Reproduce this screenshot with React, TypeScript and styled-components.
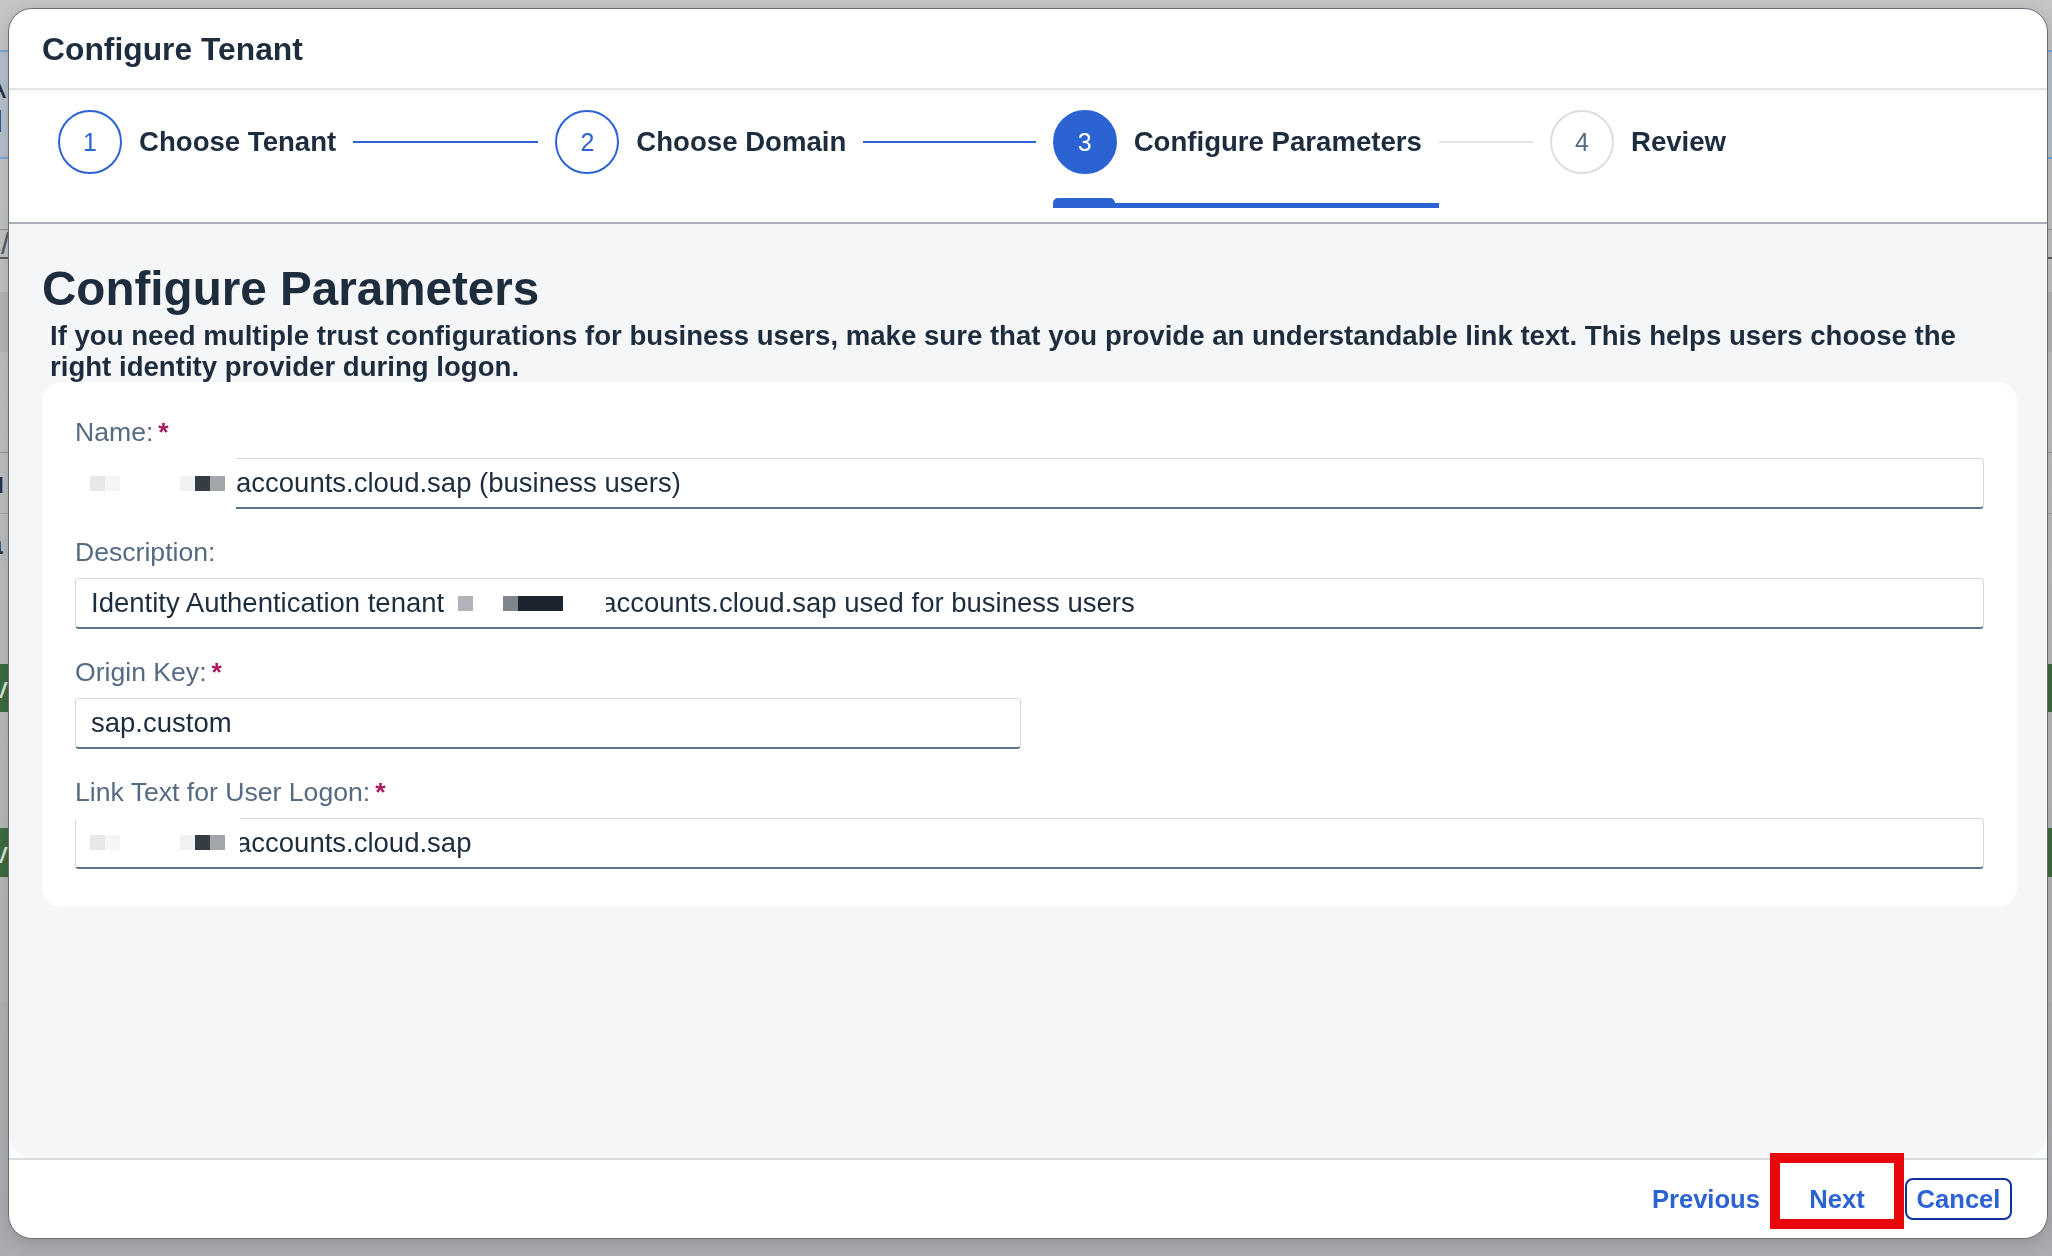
import React from "react";
import styled, { createGlobalStyle } from "styled-components";

const blue = "#2b63d2";
const ink = "#1d2d3e";
const muted = "#556b82";

const GlobalStyle = createGlobalStyle`
  html, body {
    margin: 0;
    padding: 0;
    height: 100%;
    overflow: hidden;
  }
  body {
    background: #b9babd;
    font-family: "Liberation Sans", Arial, sans-serif;
    color: ${ink};
  }
`;

/* the page behind the dialog, only a sliver of it shows at the left */
const Backdrop = styled.div`
  height: 100vh;
  display: flex;
  flex-direction: column;
  background: linear-gradient(180deg, #c4c5c7 0%, #b7b9bb 60%, #a9abae 100%);
`;

const BgRow = styled.div<{ $h?: number; $bg?: string; $line?: string; $top?: string }>`
  height: ${(p) => (p.$h ? `${p.$h}px` : "auto")};
  flex: ${(p) => (p.$h ? "none" : 1)};
  background: ${(p) => p.$bg || "transparent"};
  border-bottom: ${(p) => p.$line || "none"};
  border-top: ${(p) => p.$top || "none"};
  display: flex;
  flex-direction: column;
  justify-content: center;
  overflow: hidden;
  white-space: nowrap;
`;

const Frag = styled.span<{ $color?: string; $bold?: boolean }>`
  margin-left: -14px;
  font-size: 30px;
  line-height: 34px;
  font-weight: ${(p) => (p.$bold ? 700 : 400)};
  color: ${(p) => p.$color || "#2a3440"};
`;

const Dialog = styled.div`
  position: fixed;
  top: 8px;
  left: 8px;
  width: 2040px;
  height: 1231px;
  box-sizing: border-box;
  border: 1px solid #6b6f75;
  border-radius: 24px;
  background: #fff;
  overflow: hidden;
  display: flex;
  flex-direction: column;
  box-shadow: 0 4px 16px rgba(0, 0, 0, 0.15);
`;

const Header = styled.header`
  position: relative;
  z-index: 2;
  height: 81px;
  box-sizing: border-box;
  padding: 2px 0 0 33px;
  display: flex;
  align-items: center;
  border-bottom: 2px solid #e3e5e7;
  box-shadow: 0 2px 6px rgba(0, 0, 0, 0.04);
`;

const Title = styled.h1`
  margin: 0;
  font-size: 31.8px;
  font-weight: 700;
  color: ${ink};
`;

const Steps = styled.nav`
  height: 134px;
  box-sizing: border-box;
  padding: 20px 0 0 49px;
  display: flex;
  align-items: flex-start;
  border-bottom: 2px solid #a9b0b7;
`;

const StepItem = styled.div<{ $last?: boolean }>`
  flex: ${(p) => (p.$last ? "none" : 1)};
  width: ${(p) => (p.$last ? "497px" : "auto")};
  display: flex;
  align-items: flex-start;
`;

const StepHead = styled.div`
  display: flex;
  flex-direction: column;
`;

const HeadRow = styled.div`
  display: flex;
  align-items: center;
  gap: 17px;
  padding-right: 17px;
`;

const Circle = styled.span<{ $state: "done" | "active" | "todo" }>`
  width: 64px;
  height: 64px;
  box-sizing: border-box;
  border-radius: 50%;
  flex: none;
  display: flex;
  align-items: center;
  justify-content: center;
  font-size: 25px;
  border: 2px solid ${(p) => (p.$state === "todo" ? "#dcdddf" : blue)};
  background: ${(p) => (p.$state === "active" ? blue : "#fff")};
  color: ${(p) =>
    p.$state === "active" ? "#fff" : p.$state === "todo" ? muted : blue};
`;

const StepLabel = styled.span`
  font-size: 27.6px;
  font-weight: 700;
  color: ${ink};
  white-space: nowrap;
`;

const Underline = styled.div`
  margin-top: 24px;
  display: flex;
  align-items: flex-end;
`;

const UnderBump = styled.span`
  width: 62px;
  height: 10px;
  border-radius: 5px 5px 0 0;
  background: ${blue};
`;

const UnderRest = styled.span`
  flex: 1;
  height: 5px;
  background: ${blue};
`;

const Connector = styled.span<{ $done?: boolean }>`
  flex: 1;
  height: 2px;
  margin: 31px 17px 0 0;
  background: ${(p) => (p.$done ? blue : "#e2e3e4")};
`;

const Content = styled.main`
  flex: 1;
  background: #f5f6f7;
  padding: 37px 30px 0 33px;
  border-radius: 0 0 24px 24px;
`;

const Heading = styled.h2`
  margin: 0;
  font-size: 47.6px;
  line-height: 56px;
  font-weight: 700;
  color: ${ink};
`;

const Intro = styled.p`
  margin: 3px 0 0;
  padding: 0 24px 0 8px;
  font-size: 27.6px;
  line-height: 31px;
  font-weight: 700;
  color: ${ink};
`;

const Card = styled.section`
  background: #fff;
  border-radius: 20px;
  padding: 34px 33px 38px 33px;
  display: flex;
  flex-direction: column;
  gap: 27px;
`;

const Field = styled.div`
  display: flex;
  flex-direction: column;
  gap: 10px;
`;

const Label = styled.label`
  font-size: 26.6px;
  line-height: 32px;
  color: ${muted};
`;

const Required = styled.span`
  margin-left: 5px;
  font-weight: 700;
  color: #aa1a60;
`;

const InputBox = styled.div<{ $width?: number; $pad?: number }>`
  position: relative;
  width: ${(p) => (p.$width ? `${p.$width}px` : "100%")};
  height: 51px;
  box-sizing: border-box;
  padding-left: ${(p) => p.$pad ?? 15}px;
  border: 1px solid #d3d8dd;
  border-bottom: 2px solid #5b738b;
  border-radius: 4px;
  background: #fff;
  display: flex;
  align-items: center;
  font-size: 27.5px;
  color: ${ink};
  white-space: nowrap;
`;

/* white mask with pixel blocks over the left part of a value */
const Mask = styled.span<{ $w: number; $cover?: boolean }>`
  position: absolute;
  z-index: 1;
  top: -1px;
  bottom: ${(p) => (p.$cover ? "-2px" : "0")};
  left: ${(p) => (p.$cover ? "-1px" : "0")};
  width: ${(p) => p.$w}px;
  padding-left: ${(p) => (p.$cover ? 15 : 14)}px;
  box-sizing: border-box;
  background: #fff;
  display: flex;
  align-items: center;
`;

const InlineMask = styled.span`
  position: relative;
  z-index: 1;
  width: 155px;
  height: 30px;
  margin: 0 -5px 0 7px;
  padding-left: 7px;
  box-sizing: border-box;
  background: #fff;
  display: inline-flex;
  align-items: center;
`;

const Pix = styled.i<{ $c: string; $w?: number }>`
  display: inline-block;
  flex: none;
  width: ${(p) => p.$w ?? 15}px;
  height: 15px;
  background: ${(p) => p.$c};
`;

const Footer = styled.footer`
  height: 80px;
  box-sizing: border-box;
  border-top: 2px solid #d9dcdf;
  padding-right: 35px;
  display: flex;
  align-items: center;
  justify-content: flex-end;
`;

const TextButton = styled.button<{ $outlined?: boolean; $width?: number }>`
  position: relative;
  height: 42px;
  width: ${(p) => (p.$width ? `${p.$width}px` : "auto")};
  padding: 0;
  box-sizing: border-box;
  border: 2px solid ${(p) => (p.$outlined ? "#10339a" : "transparent")};
  border-radius: 8px;
  background: transparent;
  font-family: "Liberation Sans", Arial, sans-serif;
  font-size: 25.6px;
  font-weight: 700;
  color: ${blue};
  cursor: pointer;
`;

/* red annotation frame drawn over the Next button */
const Highlight = styled.span`
  position: absolute;
  left: -10px;
  right: -10px;
  top: -27px;
  bottom: -11px;
  border: 10px solid #e8070a;
  pointer-events: none;
`;

const steps = [
  { n: 1, label: "Choose Tenant", state: "done" as const },
  { n: 2, label: "Choose Domain", state: "done" as const },
  { n: 3, label: "Configure Parameters", state: "active" as const },
  { n: 4, label: "Review", state: "todo" as const },
];

function NameMask({ w, cover }: { w: number; cover?: boolean }) {
  return (
    <Mask $w={w} $cover={cover}>
      <Pix $c="#e6e7e9" />
      <Pix $c="#f4f5f6" />
      <Pix $c="transparent" $w={60} />
      <Pix $c="#f0f1f2" />
      <Pix $c="#363c45" />
      <Pix $c="#a2a5aa" />
    </Mask>
  );
}

export default function App() {
  return (
    <>
      <GlobalStyle />
      <Backdrop>
        <BgRow $h={50} />
        <BgRow $h={105} $bg="#b6c0ca" $top="2px solid #78a5d8" $line="2px solid #78a5d8">
          <Frag>A</Frag>
          <Frag>d</Frag>
        </BgRow>
        <BgRow $h={70} $line="1px solid #909295" />
        <BgRow $h={27} $line="2px solid #5b5f64">
          <Frag $color="#555b62">c/</Frag>
        </BgRow>
        <BgRow $h={33} />
        <BgRow $h={60} $bg="#b2b4b6" />
        <BgRow $h={100} $line="1px solid #959799" />
        <BgRow $h={60} $line="1px solid #a0a2a4">
          <Frag $bold>u</Frag>
        </BgRow>
        <BgRow $h={60}>
          <Frag $bold>a</Frag>
        </BgRow>
        <BgRow $h={90} />
        <BgRow $h={48} $bg="#3d6b3f">
          <Frag $color="#d8e4d8">iv</Frag>
        </BgRow>
        <BgRow $h={50}>
          <Frag $bold>t</Frag>
        </BgRow>
        <BgRow $h={66} />
        <BgRow $h={49} $bg="#3d6b3f">
          <Frag $color="#d8e4d8">iv</Frag>
        </BgRow>
        <BgRow $h={25} />
        <BgRow $h={100} $bg="#b3b5b7" />
        <BgRow />
      </Backdrop>

      <Dialog role="dialog" aria-label="Configure Tenant">
        <Header>
          <Title>Configure Tenant</Title>
        </Header>

        <Steps>
          {steps.map((s, i) => (
            <StepItem key={s.n} $last={i === steps.length - 1}>
              <StepHead>
                <HeadRow>
                  <Circle $state={s.state}>{s.n}</Circle>
                  <StepLabel>{s.label}</StepLabel>
                </HeadRow>
                {s.state === "active" && (
                  <Underline>
                    <UnderBump />
                    <UnderRest />
                  </Underline>
                )}
              </StepHead>
              {i < steps.length - 1 && <Connector $done={s.state === "done"} />}
            </StepItem>
          ))}
        </Steps>

        <Content>
          <Heading>Configure Parameters</Heading>
          <Intro>
            If you need multiple trust configurations for business users, make sure that you
            provide an understandable link text. This helps users choose the right identity
            provider during logon.
          </Intro>

          <Card>
            <Field>
              <Label>
                Name:<Required>*</Required>
              </Label>
              <InputBox $pad={160}>
                <NameMask w={161} cover />
                accounts.cloud.sap (business users)
              </InputBox>
            </Field>

            <Field>
              <Label>Description:</Label>
              <InputBox>
                Identity Authentication tenant
                <InlineMask>
                  <Pix $c="#b0b3b7" />
                  <Pix $c="transparent" $w={30} />
                  <Pix $c="#80858c" />
                  <Pix $c="#1c2430" $w={45} />
                </InlineMask>
                accounts.cloud.sap used for business users
              </InputBox>
            </Field>

            <Field>
              <Label>
                Origin Key:<Required>*</Required>
              </Label>
              <InputBox $width={946}>sap.custom</InputBox>
            </Field>

            <Field>
              <Label>
                Link Text for User Logon:<Required>*</Required>
              </Label>
              <InputBox $pad={160}>
                <NameMask w={164} />
                accounts.cloud.sap
              </InputBox>
            </Field>
          </Card>
        </Content>

        <Footer>
          <TextButton style={{ marginRight: 16 }}>Previous</TextButton>
          <TextButton $width={118}>
            Next
            <Highlight />
          </TextButton>
          <TextButton $outlined $width={107} style={{ marginLeft: 9 }}>
            Cancel
          </TextButton>
        </Footer>
      </Dialog>
    </>
  );
}
